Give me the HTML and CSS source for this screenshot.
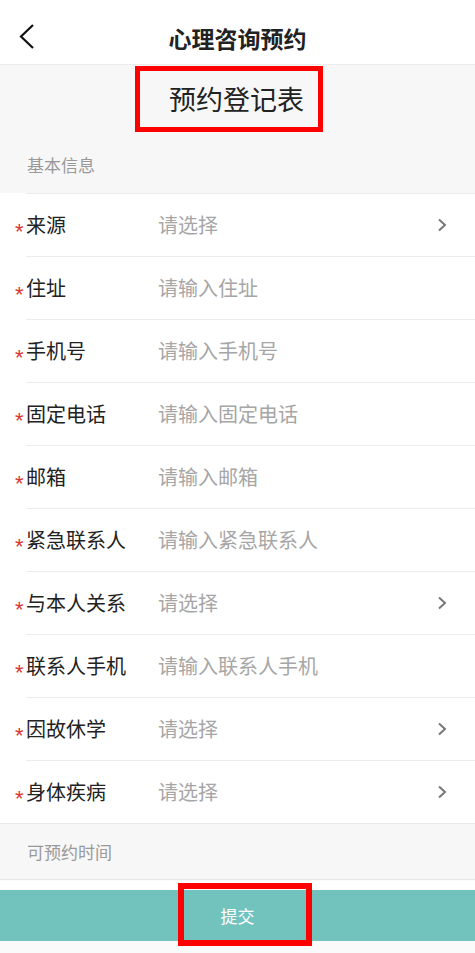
FILE: index.html
```html
<!DOCTYPE html>
<html lang="zh-CN">
<head>
    <meta charset="UTF-8">
    <meta name="viewport" content="width=device-width, initial-scale=1.0">
    <title>心理咨询预约</title>
    <link rel="stylesheet" href="styles.css">
</head>
<body>

<div class="header">
    <span class="back">
        <svg width="16" height="26" viewBox="0 0 16 26"><polyline points="14,1 2,12.5 14,24" fill="none" stroke="#111" stroke-width="2.2"/></svg>
    </span>
    <h1>心理咨询预约</h1>
</div>

<div class="form-head">
    <div class="title-box">预约登记表</div>
</div>
<div class="section-title first">基本信息</div>

<div class="form-list">
    <div class="row"><label><span class="req">*</span>来源</label><span class="ph">请选择</span><span class="arrow"><svg width="10" height="14" viewBox="0 0 10 14"><polyline points="2,1.5 8,7 2,12.5" fill="none" stroke="#777" stroke-width="2"/></svg></span></div>
    <div class="row"><label><span class="req">*</span>住址</label><span class="ph">请输入住址</span></div>
    <div class="row"><label><span class="req">*</span>手机号</label><span class="ph">请输入手机号</span></div>
    <div class="row"><label><span class="req">*</span>固定电话</label><span class="ph">请输入固定电话</span></div>
    <div class="row"><label><span class="req">*</span>邮箱</label><span class="ph">请输入邮箱</span></div>
    <div class="row"><label><span class="req">*</span>紧急联系人</label><span class="ph">请输入紧急联系人</span></div>
    <div class="row"><label><span class="req">*</span>与本人关系</label><span class="ph">请选择</span><span class="arrow"><svg width="10" height="14" viewBox="0 0 10 14"><polyline points="2,1.5 8,7 2,12.5" fill="none" stroke="#777" stroke-width="2"/></svg></span></div>
    <div class="row"><label><span class="req">*</span>联系人手机</label><span class="ph">请输入联系人手机</span></div>
    <div class="row"><label><span class="req">*</span>因故休学</label><span class="ph">请选择</span><span class="arrow"><svg width="10" height="14" viewBox="0 0 10 14"><polyline points="2,1.5 8,7 2,12.5" fill="none" stroke="#777" stroke-width="2"/></svg></span></div>
    <div class="row"><label><span class="req">*</span>身体疾病</label><span class="ph">请选择</span><span class="arrow"><svg width="10" height="14" viewBox="0 0 10 14"><polyline points="2,1.5 8,7 2,12.5" fill="none" stroke="#777" stroke-width="2"/></svg></span></div>
</div>

<div class="section-title time">可预约时间</div>

<div class="submit-wrap">
    <button class="submit">提交</button>
    <div class="mark"></div>
</div>

</body>
</html>
```

FILE: styles.css
```css
body {
    margin: 0;
    font-family: "Noto Sans CJK SC", "Noto Sans", sans-serif;
    background: #fafafa;
    color: #222;
    width: 475px;
    min-height: 953px;
}
.header {
    height: 52px;
    padding-top: 12px;
    background: #fff;
    border-bottom: 1px solid #ececec;
    display: flex;
    align-items: center;
    justify-content: center;
    position: relative;
}
.header h1 {
    margin: 0;
    font-size: 23px;
    font-weight: bold;
    color: #222;
    line-height: 30px;
}
.back {
    position: absolute;
    left: 19px;
    top: 24px;
    line-height: 0;
}
.form-head {
    background: #f7f7f7;
    padding: 1px 0 0 135px;
}
.title-box {
    box-sizing: border-box;
    width: 188px;
    height: 66px;
    border: 5px solid #f00;
    padding-left: 29px;
    font-size: 27px;
    line-height: 56px;
    color: #222;
}
.section-title {
    background: #f7f7f7;
    font-size: 17px;
    color: #999;
    padding-left: 27px;
    line-height: 24px;
}
.section-title.first {
    padding-top: 21px;
    padding-bottom: 16px;
}
.section-title.time {
    padding-top: 16px;
    padding-bottom: 15px;
    border-bottom: 1px solid #e6e6e6;
}
.form-list {
    background: #fff;
    padding-left: 26px;
    border-bottom: 1px solid #e8e8e8;
}
.row {
    height: 62px;
    border-top: 1px solid #ececec;
    display: flex;
    align-items: center;
    padding-right: 28px;
}
.row label {
    margin-left: -11px;
    width: 143px;
    font-size: 20px;
    line-height: 30px;
    color: #222;
    display: flex;
    align-items: center;
}
.req {
    display: block;
    width: 11px;
    color: #dc3530;
    font-family: "Liberation Sans", sans-serif;
    font-size: 22px;
    line-height: 22px;
    padding-top: 13px;
}
.ph {
    flex: 1;
    font-size: 20px;
    line-height: 30px;
    color: #a6a6a6;
}
.arrow {
    line-height: 0;
}
.submit-wrap {
    margin-top: 1px;
    padding-top: 9px;
    background: #fff;
    position: relative;
}
.submit {
    display: block;
    width: 100%;
    height: 51px;
    border: none;
    background: #72c2bd;
    color: #fff;
    font-family: inherit;
    font-size: 17px;
    padding: 0;
}
.mark {
    position: absolute;
    left: 178px;
    top: 2px;
    width: 134px;
    height: 63px;
    box-sizing: border-box;
    border: 6px solid #f00;
}
```
